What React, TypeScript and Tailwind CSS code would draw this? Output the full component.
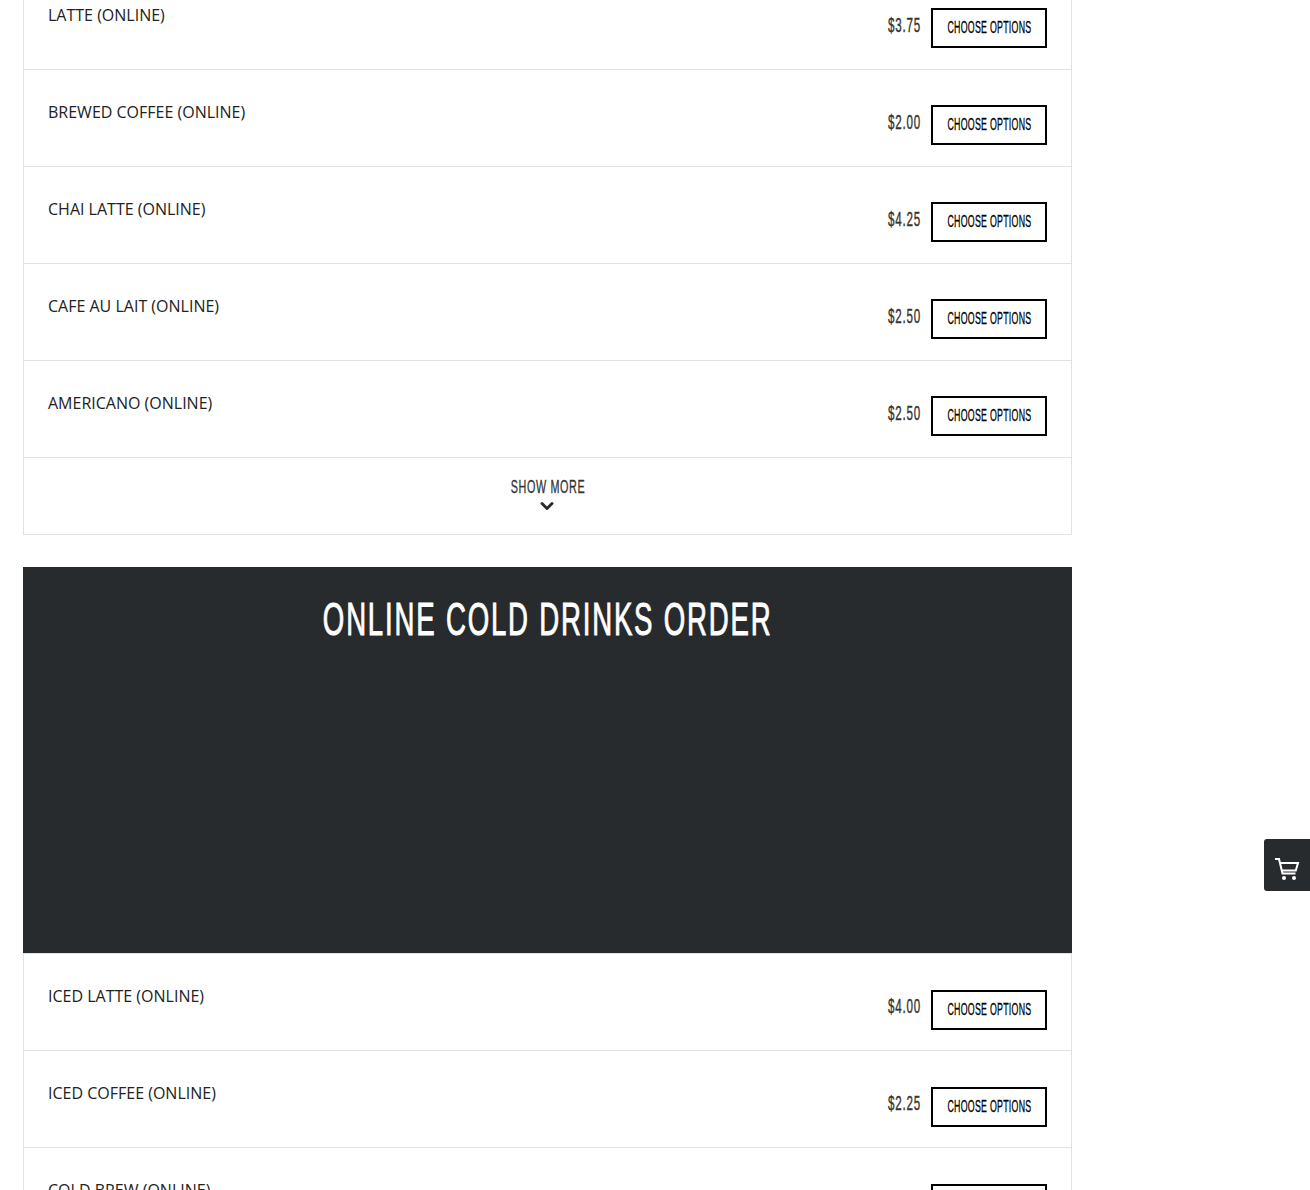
import { ChevronDown } from "lucide-react";

type Item = { name: string; price: string };

const hotDrinks: Item[] = [
  { name: "Latte (Online)", price: "$3.75" },
  { name: "Brewed Coffee (Online)", price: "$2.00" },
  { name: "Chai Latte (Online)", price: "$4.25" },
  { name: "Cafe Au Lait (Online)", price: "$2.50" },
  { name: "Americano (Online)", price: "$2.50" },
];

const coldDrinks: Item[] = [
  { name: "Iced Latte (Online)", price: "$4.00" },
  { name: "Iced Coffee (Online)", price: "$2.25" },
  { name: "Cold Brew (Online)", price: "$3.00" },
];

function CartIcon() {
  return (
    <svg width="26" height="26" viewBox="0 0 26 26" fill="none" stroke="currentColor" strokeWidth="2">
      <path d="M1 3h4l3.5 14.5h13" />
      <path d="M6 7h18l-2.2 7.5H8" />
      <circle cx="10" cy="22" r="2" fill="currentColor" stroke="none" />
      <circle cx="20" cy="22" r="2" fill="currentColor" stroke="none" />
    </svg>
  );
}

function MenuRow({ item, cold }: { item: Item; cold?: boolean }) {
  return (
    <div className="flex h-[97px] items-start justify-between border-b border-[#e2e2e2] pl-6 pr-6">
      <div className="pt-[30px] font-['Open_Sans',sans-serif] text-base leading-6 uppercase text-[#222]">
        {item.name}
      </div>
      <div className={cold ? "flex items-start pt-9" : "flex items-start pt-[35px]"}>
        <span
          className={`mr-[10px] inline-block origin-right scale-x-[0.58] font-['Liberation_Sans',sans-serif] text-[20px] leading-6 tracking-[1.4px] text-[#333] [-webkit-text-stroke:0.4px_#333] ${
            cold ? "mt-[4px]" : "mt-[5px]"
          }`}
        >
          {item.price}
        </span>
        <button
          type="button"
          className="flex h-10 w-[116px] items-center justify-center border-2 border-black bg-white"
        >
          <span className="inline-block scale-x-[0.55] whitespace-nowrap font-['Liberation_Sans',sans-serif] text-base uppercase tracking-[0.5px] text-black [-webkit-text-stroke:0.3px_black]">
            Choose Options
          </span>
        </button>
      </div>
    </div>
  );
}

export default function App() {
  return (
    <div className="relative h-[1190px] overflow-hidden bg-white">
      <div className="ml-[23px] mt-[-27px] w-[1049px]">
        <div className="border-x border-[#e2e2e2]">
          {hotDrinks.map((item) => (
            <MenuRow key={item.name} item={item} />
          ))}
          <div className="flex h-[77px] flex-col items-center border-b border-[#e2e2e2] pt-[17px] font-['Liberation_Sans',sans-serif] text-lg uppercase leading-6 text-[#333]">
            <span className="inline-block scale-x-[0.6] whitespace-nowrap tracking-[1px] [-webkit-text-stroke:0.3px_#333]">
              Show More
            </span>
            <ChevronDown size={20} strokeWidth={3.5} className="-ml-px -mt-[3px] text-[#282b2d]" />
          </div>
        </div>

        <div className="mt-8 h-[386px] bg-[#282b2d] pt-[22px] text-center font-['Liberation_Sans',sans-serif] text-[46px] uppercase leading-[60px] tracking-[3px] text-white">
          <span className="inline-block scale-x-[0.6] whitespace-nowrap [-webkit-text-stroke:1px_white]">
            Online Cold Drinks Order
          </span>
        </div>

        <div className="border-x border-t border-[#e2e2e2]">
          {coldDrinks.map((item) => (
            <MenuRow key={item.name} item={item} cold />
          ))}
        </div>
      </div>

      <div className="absolute left-[1264px] top-[839px] flex h-[52px] w-[46px] items-center justify-center rounded-l-[3px] bg-[#282b2d] pt-2 text-white">
        <CartIcon />
      </div>
    </div>
  );
}
